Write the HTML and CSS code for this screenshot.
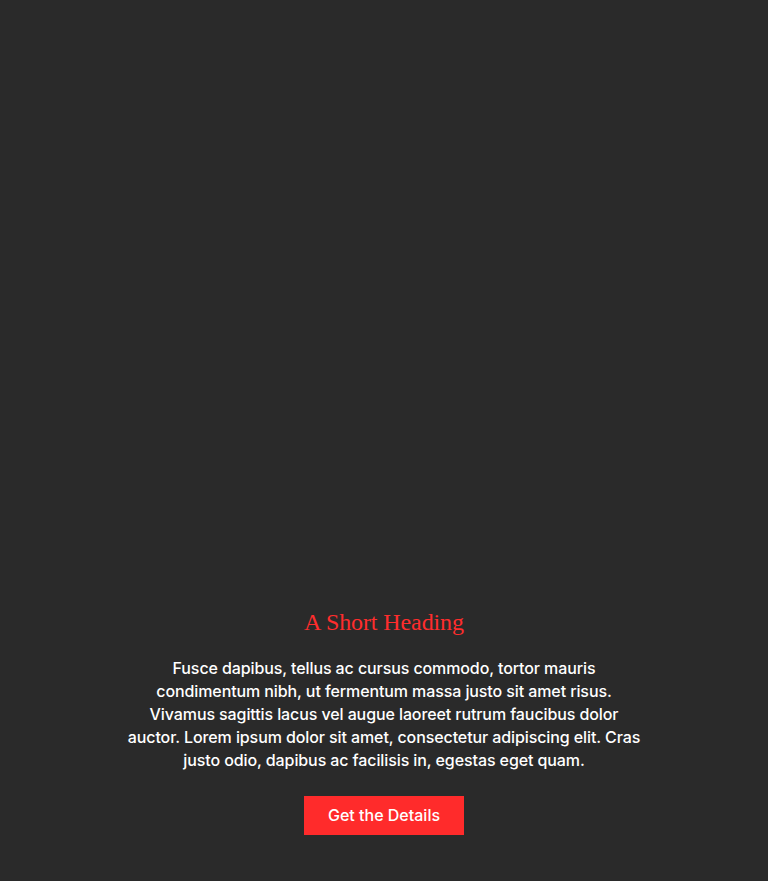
FILE: index.html
```html
<!DOCTYPE html>
<html lang="en">
<head>
<meta charset="utf-8">
<title>A Short Heading</title>
<link rel="stylesheet" href="styles.css">
</head>
<body>
<main class="hero">
  <section class="content">
    <h1 class="heading">A Short Heading</h1>
    <p class="text">Fusce dapibus, tellus ac cursus commodo, tortor mauris condimentum nibh, ut fermentum massa justo sit amet risus. Vivamus sagittis lacus vel augue laoreet rutrum faucibus dolor auctor. Lorem ipsum dolor sit amet, consectetur adipiscing elit. Cras justo odio, dapibus ac facilisis in, egestas eget quam.</p>
    <a class="button" href="#">Get the Details</a>
  </section>
</main>
</body>
</html>
```
FILE: styles.css
```css
html, body {
  margin: 0;
  padding: 0;
  background: #2a2a2a;
}
.hero {
  min-height: 100vh;
  box-sizing: border-box;
  display: flex;
  flex-direction: column;
  justify-content: flex-end;
  align-items: center;
  padding-bottom: 46px;
}
.content {
  display: flex;
  flex-direction: column;
  align-items: center;
  width: 520px;
  text-align: center;
}
.heading {
  margin: 0 0 22px;
  font-family: "Liberation Serif", "Times New Roman", serif;
  font-weight: normal;
  font-size: 24px;
  line-height: 28px;
  letter-spacing: -0.1px;
  color: #ff2d2d;
  position: relative;
  top: 1px;
}
.text {
  margin: 0 0 24px;
  font-family: Inter, "Liberation Sans", sans-serif;
  font-size: 16px;
  line-height: 23px;
  font-weight: 500;
  letter-spacing: -0.1px;
  color: #ffffff;
}
.button {
  display: inline-block;
  box-sizing: border-box;
  width: 160px;
  height: 39px;
  line-height: 39px;
  background: #ff2b2b;
  color: #ffffff;
  font-family: Inter, "Liberation Sans", sans-serif;
  font-size: 16px;
  font-weight: 500;
  text-decoration: none;
}
```
